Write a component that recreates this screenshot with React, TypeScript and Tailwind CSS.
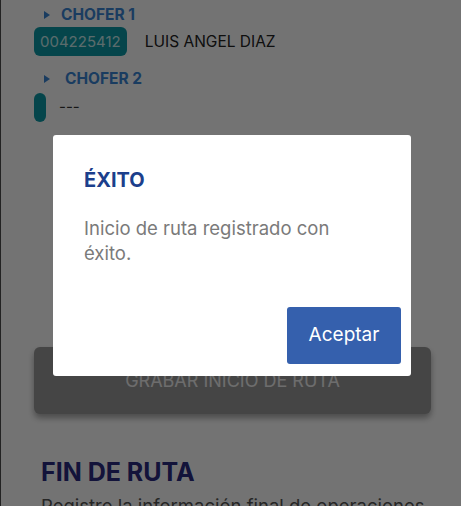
import React from "react";

const font = { fontFamily: "Inter, 'Noto Sans', sans-serif" };

function Caret() {
  return (
    <svg width="8" height="10" viewBox="0 0 8 10" className="shrink-0">
      <path d="M1 1 L7 5 L1 9 Z" fill="#3a86d6" />
    </svg>
  );
}

export default function App() {
  return (
    <div className="relative h-[506px] w-[461px] overflow-hidden bg-white border-l border-[#222]" style={font}>
      {/* Underlying page */}
      <div className="flex flex-col px-[33px]">
        <div className="flex items-center gap-[10px] pl-[9px] pt-[3px]">
          <Caret />
          <span className="text-[15.5px] font-bold text-[#3a86d6]">CHOFER 1</span>
        </div>
        <div className="mt-[1px] flex items-center gap-[18px]">
          <span className="flex h-[29px] items-center rounded-[6px] bg-[#0d9aa6] px-[6px] text-[15px] text-[#c9eef0]">004225412</span>
          <span className="text-[15.5px] text-[#222]">LUIS ANGEL DIAZ</span>
        </div>
        <div className="mt-[11px] flex items-center gap-[14px] pl-[9px]">
          <Caret />
          <span className="text-[15.5px] font-bold text-[#3a86d6]">CHOFER 2</span>
        </div>
        <div className="mt-[2px] flex items-center gap-[13px]">
          <span className="h-[29px] w-[12px] rounded-full bg-[#0d9aa6]" />
          <span className="text-[15px] text-[#333]">---</span>
        </div>

        <div className="mt-[225px] flex h-[67px] w-[397px] items-center justify-center rounded-[6px] bg-[#9a9a9a] shadow-[0_4px_6px_rgba(0,0,0,0.35)]">
          <span className="text-[18px] text-[#f2f2f2]">GRABAR INICIO DE RUTA</span>
        </div>

        <div className="mt-[42px] pl-[7px] text-[25px] font-bold leading-[32px] text-[#2a2a82]">FIN DE RUTA</div>
        <div className="mt-[5px] pl-[7px] text-[18.5px] leading-[26px] text-[#555] whitespace-nowrap">Registre la información final de operaciones</div>
      </div>

      {/* Overlay */}
      <div className="absolute inset-0 bg-black/55" />

      {/* Dialog */}
      <div className="absolute left-[52px] top-[135px] flex h-[241px] w-[358px] flex-col rounded-[3px] bg-white">
        <div className="pl-[31px] pt-[30px] text-[20px] font-bold text-[#1c3f8c]">ÉXITO</div>
        <div className="mt-[21px] pl-[31px] pr-[30px] text-[18.5px] leading-[25px] text-[#7a7a7a]">
          Inicio de ruta registrado con éxito.
        </div>
        <div className="mt-auto flex justify-end pb-[12px] pr-[10px]">
          <button className="flex h-[57px] w-[114px] items-center justify-center rounded-[3px] bg-[#3560ad] text-[19px] text-white">
            Aceptar
          </button>
        </div>
      </div>
    </div>
  );
}
